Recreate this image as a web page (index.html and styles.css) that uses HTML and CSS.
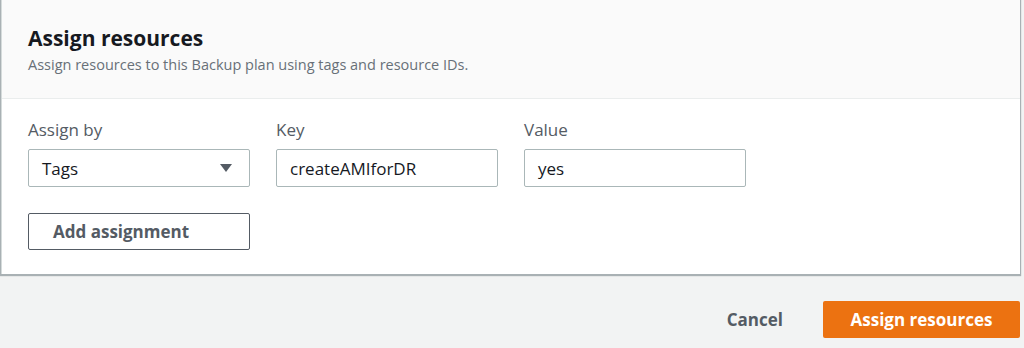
FILE: index.html
```html
<!DOCTYPE html>
<html lang="en">
<head>
  <meta charset="UTF-8">
  <title>Assign resources</title>
  <link rel="stylesheet" href="styles.css">
</head>
<body>
  <!-- resource assignment card -->
  <div class="card">
    <div class="card-header">
      <h2>Assign resources</h2>
      <p>Assign resources to this Backup plan using tags and resource IDs.</p>
    </div>
    <div class="card-body">
      <div class="fields">
        <div class="field">
          <label>Assign by</label>
          <div class="select">
            <span>Tags</span>
            <svg class="caret" width="14" height="10" viewBox="0 0 14 10"><path d="M1 1h12L7 9z" fill="#545b64"/></svg>
          </div>
        </div>
        <div class="field">
          <label>Key</label>
          <div class="input">createAMIforDR</div>
        </div>
        <div class="field">
          <label>Value</label>
          <div class="input">yes</div>
        </div>
      </div>
      <button class="btn-outline">Add assignment</button>
    </div>
  </div>

  <!-- footer actions -->
  <div class="actions">
    <button class="btn-link">Cancel</button>
    <button class="btn-primary">Assign resources</button>
  </div>
</body>
</html>
```

FILE: styles.css
```css
body {
  margin: 0;
  padding: 0 4px 0 1px;
  background-color: #f2f3f3;
  font-family: "Open Sans", Arial, sans-serif;
  color: #16191f;
}

.card {
  background: #fff;
  border-left: 1px solid #d5dbdb;
  box-shadow: 0 1px 1px 1px rgba(0, 28, 36, 0.3);
  height: 274px;
}

.card-header {
  background: #fafafa;
  border-bottom: 1px solid #eaeded;
  height: 99px;
  padding: 0 26px;
  box-sizing: border-box;
  padding-top: 26px;
}

.card-header h2 {
  margin: 0;
  font-size: 21px;
  font-weight: 700;
  line-height: 24px;
}

.card-header p {
  margin: 5px 0 0;
  font-size: 14.5px;
  line-height: 20px;
  color: #687078;
}

.card-body {
  padding: 20px 26px 0;
}

.fields {
  display: flex;
  gap: 26px;
}

.field {
  display: flex;
  flex-direction: column;
  width: 222px;
}

.field label {
  font-size: 17px;
  line-height: 22px;
  color: #545b64;
  margin-bottom: 8px;
}

.select,
.input {
  height: 38px;
  box-sizing: border-box;
  border: 1px solid #aab7b8;
  border-radius: 2px;
  padding: 0 13px;
  display: flex;
  align-items: center;
  font-size: 17px;
  color: #16191f;
}

.select {
  justify-content: space-between;
  padding-right: 16px;
}

.btn-outline {
  margin-top: 26px;
  width: 222px;
  height: 37px;
  background: #fff;
  border: 1px solid #545b64;
  border-radius: 2px;
  color: #545b64;
  font-family: inherit;
  font-size: 17px;
  font-weight: 700;
  text-align: left;
  padding: 0 24px;
}

.actions {
  display: flex;
  justify-content: flex-end;
  align-items: center;
  gap: 20px;
  margin-top: 27px;
}

.btn-link {
  background: none;
  border: none;
  color: #545b64;
  font-family: inherit;
  font-size: 17px;
  font-weight: 700;
  padding: 0 20px;
}

.btn-primary {
  background: #ec7211;
  border: none;
  border-radius: 2px;
  color: #fff;
  font-family: inherit;
  font-size: 17px;
  font-weight: 700;
  height: 37px;
  width: 197px;
}
```
